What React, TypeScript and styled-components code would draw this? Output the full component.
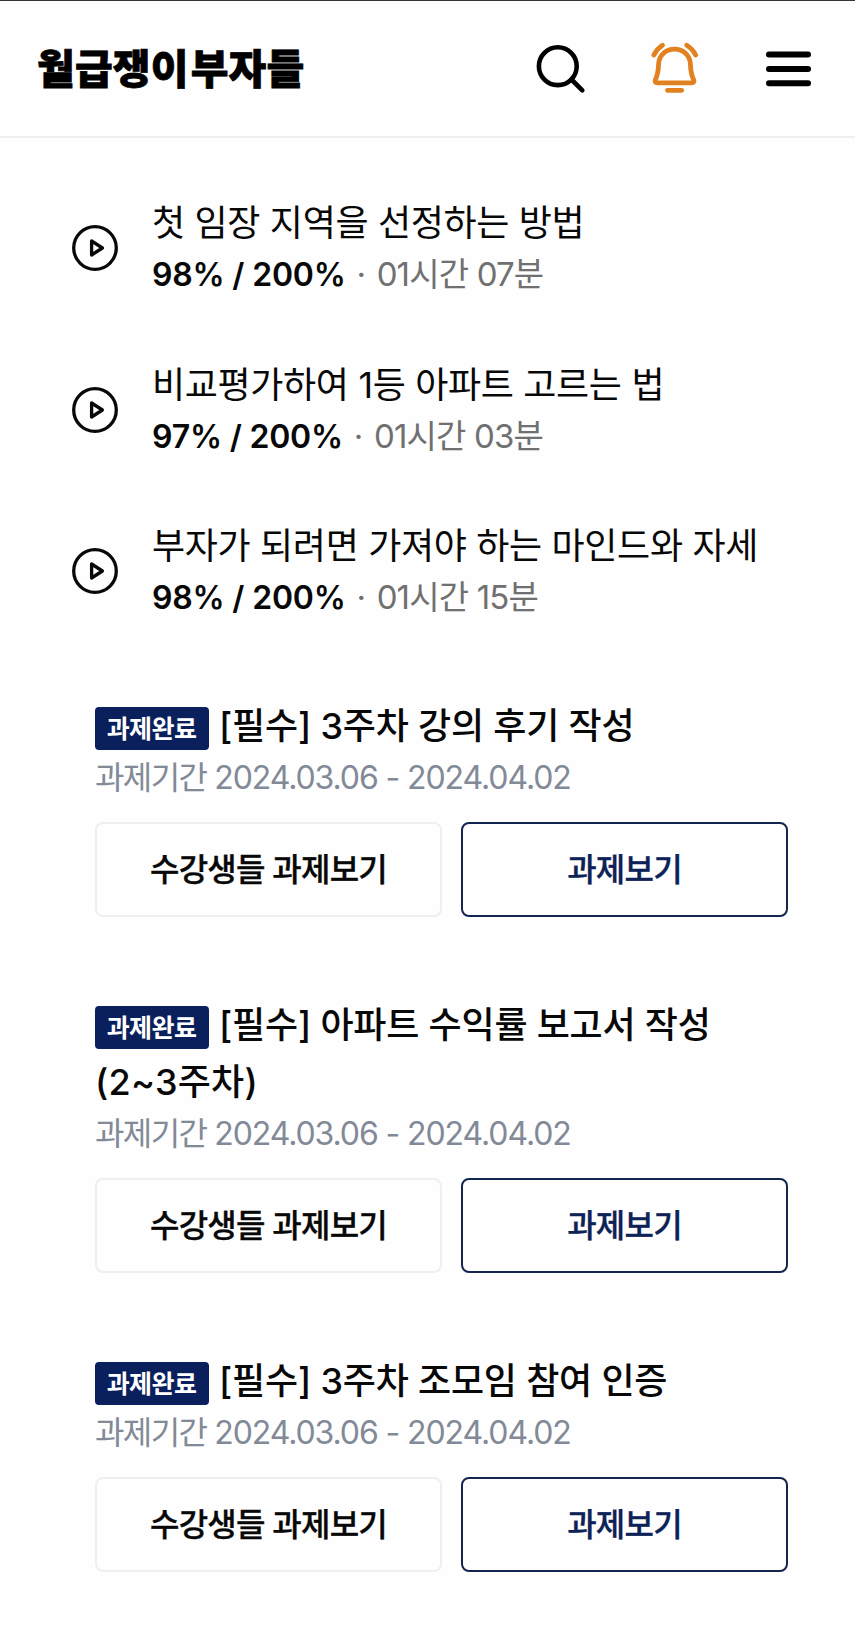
import React from "react";
import styled, { createGlobalStyle } from "styled-components";

const GlobalStyle = createGlobalStyle`
  * { box-sizing: border-box; }
  body {
    margin: 0;
    background: #fefefe;
    color: #080808;
    font-family: Inter, "Noto Sans CJK KR", sans-serif;
  }
  button { font: inherit; color: inherit; padding: 0; background: none; border: 0; }
  h1, h2, p, ul { margin: 0; padding: 0; list-style: none; }
`;

const Page = styled.div`
  width: 855px;
  height: 1640px;
  overflow: hidden;
  border-top: 1px solid #38363a;
`;

const Header = styled.header`
  display: flex;
  align-items: center;
  justify-content: space-between;
  height: 137px;
  padding: 0 44px 1px 37px;
  border-bottom: 2px solid #efefef;
`;

const Logo = styled.h1`
  font-family: "Noto Sans CJK KR", sans-serif;
  font-size: 41px;
  line-height: 60px;
  margin-top: -4px;
  font-weight: 900;
  letter-spacing: 0.2px;
  color: #000;
  white-space: nowrap;
  -webkit-text-stroke: 0.8px #000;
`;

const LogoTail = styled.span`
  margin-left: 2px;
`;

const HeaderActions = styled.nav`
  display: flex;
  align-items: center;
  gap: 67px;
`;

const IconButton = styled.button`
  display: flex;
  svg { display: block; overflow: visible; }
`;

const LessonList = styled.ul`
  padding: 56px 0 0 72px;
`;

const Lesson = styled.li`
  display: flex;
  align-items: center;
  gap: 34px;
  height: 108px;
  margin-bottom: 53.5px;
`;

const LessonText = styled.div`
  margin-top: -1px;
`;

const LessonTitle = styled.h2`
  font-size: 36px;
  line-height: 54px;
  font-weight: 400;
  letter-spacing: -0.35px;
  white-space: nowrap;
`;

const LessonMeta = styled.p`
  display: flex;
  font-size: 33px;
  line-height: 48px;
  white-space: nowrap;
`;

const Progress = styled.strong`
  font-size: 32px;
  font-weight: 600;
  letter-spacing: -0.2px;
  line-height: 49px;
`;

const Dot = styled.span`
  width: 31px;
  text-align: center;
  color: #707070;
`;

const Duration = styled.span`
  color: #707070;
  letter-spacing: -0.85px;
`;

const TaskList = styled.ul`
  padding: 19px 67px 0 95px;
`;

const Task = styled.li`
  margin-bottom: 80px;
`;

const TaskTitle = styled.h2`
  font-size: 36px;
  line-height: 57px;
  font-weight: 500;
  letter-spacing: -0.2px;
`;

const TitleNote = styled.span`
  display: block;
  letter-spacing: 0.25px;
`;

const Badge = styled.span`
  display: inline-flex;
  align-items: center;
  justify-content: center;
  width: 114px;
  height: 43px;
  margin-right: 10px;
  padding: 1px 1px 0 0;
  border-radius: 4px;
  background: #0a205c;
  color: #fff;
  font-size: 25px;
  font-weight: 600;
  letter-spacing: -0.6px;
  vertical-align: 1px;
  line-height: 1;
`;

const Period = styled.p`
  font-size: 32px;
  line-height: 46px;
  letter-spacing: -1.1px;
  color: #828997;
  white-space: nowrap;
`;

const PeriodLabel = styled.span`
  letter-spacing: -1.6px;
`;

const Actions = styled.div`
  display: grid;
  grid-template-columns: 347px 327px;
  gap: 19px;
  margin-top: 21px;
`;

const ActionButton = styled.button<{ $primary?: boolean }>`
  height: 95px;
  padding-bottom: 4px;
  border: 2px solid ${(p) => (p.$primary ? "#12264f" : "#efefef")};
  border-radius: 8px;
  color: ${(p) => (p.$primary ? "#0d2257" : "#080808")};
  font-size: 32px;
  font-weight: 500;
  letter-spacing: -0.8px;
  -webkit-text-stroke: 0.3px currentColor;
`;

const SearchIcon = () => (
  <svg width="48" height="48" viewBox="536 44 48 48" fill="none" stroke="#000" strokeWidth="4.6" strokeLinecap="round">
    <circle cx="557.8" cy="66.2" r="18.9" />
    <path d="M571.5 79.5 582.3 90.3" />
  </svg>
);

const BellIcon = () => (
  <svg width="48" height="50" viewBox="651 43 48 50" fill="none" stroke="#e2811f" strokeWidth="4.8" strokeLinecap="round" strokeLinejoin="round">
    <path d="M674.5 49.2C665.5 49.2 658.9 55.5 658.6 64C658.4 71.5 657.6 75 655.4 79.7C654.5 81.8 655.3 82.9 657.3 82.9H691.7C693.7 82.9 694.5 81.8 693.6 79.7C691.4 75 690.6 71.5 690.4 64C690.1 55.5 683.5 49.2 674.5 49.2Z" />
    <path d="M667.5 90.3H681.7" />
    <path d="M653.9 55C655.8 50.9 658.8 47.5 662.5 45.2M686.7 45.2C690.4 47.5 693.7 50.9 695.6 55" />
  </svg>
);

const MenuIcon = () => (
  <svg width="45" height="50" viewBox="766 43 45 50" fill="none" stroke="#000" strokeWidth="6" strokeLinecap="round">
    <path d="M769 54.5H808M769 69H808M769 83.2H808" />
  </svg>
);

const PlayIcon = () => (
  <svg width="46" height="46" viewBox="0 0 46 46" fill="none" stroke="#080808" strokeWidth="3.3" strokeLinejoin="round">
    <circle cx="23" cy="23" r="21.3" />
    <path d="M19.6 16V30L30.4 23Z" />
  </svg>
);

const lessons = [
  { title: "첫 임장 지역을 선정하는 방법", progress: "98% / 200%", duration: "01시간 07분" },
  { title: "비교평가하여 1등 아파트 고르는 법", progress: "97% / 200%", duration: "01시간 03분" },
  { title: "부자가 되려면 가져야 하는 마인드와 자세", progress: "98% / 200%", duration: "01시간 15분" },
];

const tasks: { title: string; note?: string }[] = [
  { title: "[필수] 3주차 강의 후기 작성" },
  { title: "[필수] 아파트 수익률 보고서 작성", note: "(2~3주차)" },
  { title: "[필수] 3주차 조모임 참여 인증" },
];

export default function App() {
  return (
    <Page>
      <GlobalStyle />
      <Header>
        <Logo>월급쟁이<LogoTail>부자들</LogoTail></Logo>
        <HeaderActions>
          <IconButton aria-label="검색"><SearchIcon /></IconButton>
          <IconButton aria-label="알림"><BellIcon /></IconButton>
          <IconButton aria-label="메뉴"><MenuIcon /></IconButton>
        </HeaderActions>
      </Header>
      <LessonList>
        {lessons.map((lesson) => (
          <Lesson key={lesson.title}>
            <PlayIcon />
            <LessonText>
              <LessonTitle>{lesson.title}</LessonTitle>
              <LessonMeta>
                <Progress>{lesson.progress}</Progress>
                <Dot>·</Dot>
                <Duration>{lesson.duration}</Duration>
              </LessonMeta>
            </LessonText>
          </Lesson>
        ))}
      </LessonList>
      <TaskList>
        {tasks.map((task) => (
          <Task key={task.title}>
            <TaskTitle>
              <Badge>과제완료</Badge>
              {task.title}
              {task.note && <TitleNote>{task.note}</TitleNote>}
            </TaskTitle>
            <Period><PeriodLabel>과제기간</PeriodLabel> 2024.03.06 - 2024.04.02</Period>
            <Actions>
              <ActionButton>수강생들 과제보기</ActionButton>
              <ActionButton $primary>과제보기</ActionButton>
            </Actions>
          </Task>
        ))}
      </TaskList>
    </Page>
  );
}
